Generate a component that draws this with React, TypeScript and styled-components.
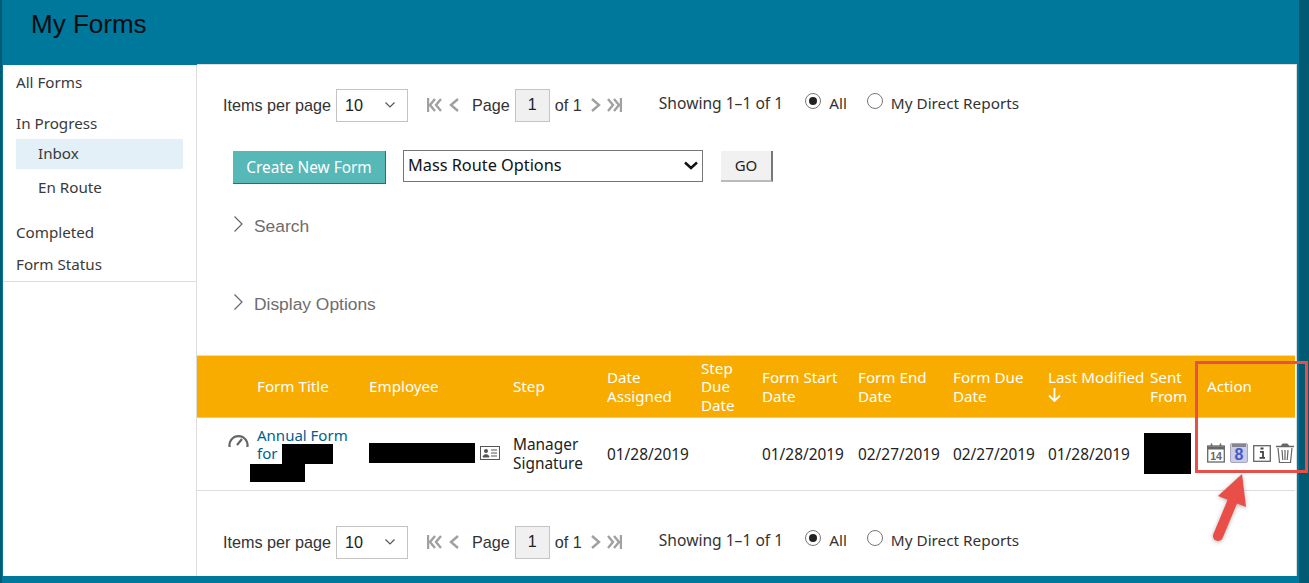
import { createGlobalStyle, styled } from "styled-components";

const GlobalStyle = createGlobalStyle`
  html, body {
    margin: 0;
    padding: 0;
    background: #00789b;
  }
  * {
    box-sizing: border-box;
  }
`;

const Page = styled.div`
  position: relative;
  width: 1309px;
  height: 583px;
  overflow: hidden;
  background: #00789b;
  border-left: 2px solid #005a72;
  font-family: "Noto Sans", sans-serif;
  color: #222;
`;

const Title = styled.h1`
  height: 64px;
  margin: 0;
  padding: 8px 0 0 29px;
  font: 400 26px/32px "Liberation Sans", sans-serif;
  color: #050d10;
`;

const Body = styled.div`
  display: flex;
  height: 512px;
`;

const Sidebar = styled.nav`
  width: 194px;
  height: 511px;
  margin: 1px 0 0 1px;
  background: #fff;
  border-right: 1px solid #ddd;
  font-size: 15.2px;
  color: #3a3a3a;
`;

const NavList = styled.div`
  height: 217px;
  padding: 3px 13px 0 13px;
  border-bottom: 1px solid #ddd;
`;

const NavItem = styled.div<{ $top?: number; $sub?: boolean; $active?: boolean }>`
  height: 30px;
  margin-top: ${(p) => p.$top ?? 0}px;
  padding-left: ${(p) => (p.$sub ? 22 : 0)}px;
  line-height: 28px;
  background: ${(p) => (p.$active ? "#e3f0f8" : "transparent")};
`;

const Main = styled.main`
  width: 1100px;
  background: #fff;
  border-top: 1px solid #ddd;
  border-right: 1px solid #ddd;
`;

const Pager = styled.div<{ $top: number }>`
  display: flex;
  align-items: center;
  height: 34px;
  margin-top: ${(p) => p.$top}px;
  padding-left: 26px;
  font-size: 15.3px;
`;

const ArialLabel = styled.span`
  font: 16.2px "Liberation Sans", sans-serif;
  color: #333;
`;

const PerPage = styled.div`
  display: flex;
  align-items: center;
  justify-content: space-between;
  width: 72px;
  height: 33px;
  margin: 0 19px 0 5px;
  padding: 0 11px 0 8px;
  border: 1px solid #c4c4c4;
  font: 16.2px "Liberation Sans", sans-serif;
`;

const PageBox = styled.div`
  display: flex;
  align-items: center;
  justify-content: center;
  width: 35px;
  height: 33px;
  margin: 0 5px;
  background: #f0f0f0;
  border: 1px solid #c4c4c4;
  font: 16px "Liberation Sans", sans-serif;
`;

const PagerIcon = styled.svg<{ $w: number; $left?: number }>`
  width: ${(p) => p.$w}px;
  height: 16px;
  margin-left: ${(p) => p.$left ?? 0}px;
  fill: none;
  stroke: #a0a0a0;
  stroke-width: 2.4;
  flex: none;
`;

const PageLabel = styled(ArialLabel)`
  margin-left: 13px;
`;

const Showing = styled.span`
  margin: -4px 22px 0 37px;
  font-size: 15.6px;
  color: #333;
`;

const RadioLabel = styled.label`
  display: flex;
  align-items: center;
  gap: 8px;
  margin: -4px 20px 0 0;
  color: #333;
`;

const Radio = styled.span<{ $on?: boolean }>`
  position: relative;
  width: 16px;
  height: 16px;
  margin-top: -4px;
  border: 1px solid #777;
  border-radius: 50%;
  &::after {
    content: "";
    display: ${(p) => (p.$on ? "block" : "none")};
    position: absolute;
    inset: 3px;
    border-radius: 50%;
    background: #222;
  }
`;

const ActionRow = styled.div`
  display: flex;
  align-items: center;
  height: 34px;
  margin-top: 27px;
  padding-left: 36px;
`;

const CreateButton = styled.button`
  width: 153px;
  height: 33px;
  margin-top: 2px;
  padding: 2px 0 0;
  background: #57b8b8;
  border: 0;
  border-bottom: 1px solid #2c6f73;
  border-right: 1px solid #2c6f73;
  color: #fff;
  font: 15.4px "Noto Sans", sans-serif;
`;

const MassSelect = styled.div`
  display: flex;
  align-items: center;
  justify-content: space-between;
  width: 300px;
  height: 32px;
  margin: 0 18px 0 17px;
  padding: 0 4px 2px;
  border: 1px solid #767676;
  font-size: 16.3px;
  color: #111;
`;

const GoButton = styled.button`
  width: 52px;
  height: 31px;
  padding: 0;
  background: #f1f1f1;
  border: 0;
  border-right: 2px solid #777;
  border-bottom: 2px solid #bbb;
  font: 15px "Noto Sans", sans-serif;
  color: #222;
`;

const Section = styled.div<{ $top: number }>`
  display: flex;
  align-items: center;
  gap: 10px;
  height: 24px;
  margin-top: ${(p) => p.$top}px;
  padding-left: 36px;
  font: 17.4px "Liberation Sans", sans-serif;
  color: #6d6d6d;
`;

const Chevron = styled.svg`
  width: 11px;
  height: 18px;
  margin-top: -5px;
  fill: none;
  stroke: #666;
  stroke-width: 1.2;
`;

const Grid = styled.div`
  display: grid;
  grid-template-columns: 172px 144px 94px 94px 61px 96px 95px 95px 102px 57px 88px;
  width: 1098px;
  margin-top: 39px;
  border-top: 1px solid #ddd;
`;

const HeadCell = styled.div`
  display: flex;
  align-items: center;
  height: 62px;
  background: #f8ac00;
  border-bottom: 1px solid #f3c66a;
  color: #fff;
  font-size: 15.2px;
  line-height: 18.5px;
`;

const TitleHead = styled(HeadCell)`
  padding-left: 60px;
`;

const RowCell = styled.div`
  display: flex;
  align-items: center;
  height: 73px;
  font-size: 15.4px;
  line-height: 19px;
  color: #222;
  border-bottom: 1px solid #ddd;
`;

const TitleCell = styled(RowCell)`
  position: relative;
  align-items: flex-start;
  padding: 8px 0 0 60px;
`;

const FormLink = styled.a`
  color: #005f8f;
  font-size: 15px;
  line-height: 18px;
`;

const Blackout = styled.span<{ $w: number; $h: number }>`
  display: block;
  flex: none;
  width: ${(p) => p.$w}px;
  height: ${(p) => p.$h}px;
  background: #000;
`;

const FirstNameBlackout = styled(Blackout)`
  position: absolute;
  left: 85px;
  top: 26px;
`;

const LastNameBlackout = styled(Blackout)`
  position: absolute;
  left: 53px;
  top: 46px;
`;

const EmployeeBlackout = styled(Blackout)`
  margin-top: -3px;
`;

const SenderBlackout = styled(Blackout)`
  margin: -2px 0 0 -6px;
`;

const GaugeIcon = styled.svg`
  position: absolute;
  left: 31px;
  top: 14px;
  width: 21px;
  height: 15px;
  fill: none;
  stroke: #666;
`;

const CardIcon = styled.svg`
  flex: none;
  width: 20px;
  height: 14px;
  margin: -2px 0 0 5px;
`;

const IconRow = styled.div`
  display: flex;
  align-items: center;
  gap: 5px;
  margin-top: -2px;
`;

const Callout = styled.div`
  position: absolute;
  left: 1193px;
  top: 361px;
  width: 113px;
  height: 112px;
  border: 3px solid #e94e48;
  pointer-events: none;
`;

const Arrow = styled.svg`
  position: absolute;
  left: 1198px;
  top: 470px;
  width: 60px;
  height: 80px;
  filter: drop-shadow(0 1px 2px rgba(0, 0, 0, 0.3));
`;

const RightStrip = styled.div`
  position: absolute;
  right: 0;
  top: 0;
  bottom: 0;
  width: 10px;
  background: #005a72;
`;

const ChevronDown = () => (
  <svg width="12" height="8" viewBox="0 0 12 8" fill="none" stroke="#555" strokeWidth="1.2">
    <path d="M1.5 1.5 6 6l4.5-4.5" />
  </svg>
);

const PagerControls = () => (
  <>
    <PagerIcon viewBox="0 0 16 16" $w={16}>
      <path d="M1 1v14M8 2 3 8l5 6M14 2 9 8l5 6" />
    </PagerIcon>
    <PagerIcon viewBox="0 0 11 16" $w={11} $left={5}>
      <path d="M10 2 3 8l7 6" />
    </PagerIcon>
    <PageLabel>Page</PageLabel>
    <PageBox>1</PageBox>
    <ArialLabel>of 1</ArialLabel>
    <PagerIcon viewBox="0 0 11 16" $w={11} $left={8}>
      <path d="M2 2l7 6-7 6" />
    </PagerIcon>
    <PagerIcon viewBox="0 0 16 16" $w={16} $left={5}>
      <path d="M2 2l5 6-5 6M8 2l5 6-5 6M15 1v14" />
    </PagerIcon>
  </>
);

const PagerBar = ({ top }: { top: number }) => (
  <Pager $top={top}>
    <ArialLabel>Items per page</ArialLabel>
    <PerPage>
      10
      <ChevronDown />
    </PerPage>
    <PagerControls />
    <Showing>Showing 1–1 of 1</Showing>
    <RadioLabel>
      <Radio $on />
      All
    </RadioLabel>
    <RadioLabel>
      <Radio />
      My Direct Reports
    </RadioLabel>
  </Pager>
);

const SectionChevron = () => (
  <Chevron viewBox="0 0 11 18">
    <path d="M1.5 1.5 9 9l-7.5 7.5" />
  </Chevron>
);

const ActionIcons = () => (
  <IconRow>
    <svg width="18" height="20" viewBox="0 0 18 20" fill="none" stroke="#666">
      <rect x="0.7" y="3" width="16.6" height="16" strokeWidth="1.3" />
      <path d="M1 5h16" strokeWidth="3" />
      <path d="M4.5 0.5v3M13.5 0.5v3" strokeWidth="1.5" />
      <text x="9" y="16.5" fontSize="10.5" fontFamily="Liberation Sans" fontWeight="700" fill="#666" stroke="none" textAnchor="middle">
        14
      </text>
    </svg>
    <svg width="18" height="20" viewBox="0 0 18 20">
      <rect x="0.5" y="0.5" width="17" height="19" rx="1.5" fill="#c9cbe8" stroke="#a5a5bd" />
      <path d="M2 1h14v3H2z" fill="#85858f" />
      <text x="9" y="16.5" fontSize="16" fontFamily="Liberation Sans" fontWeight="700" fill="#4857c4" textAnchor="middle">
        8
      </text>
    </svg>
    <svg width="18" height="17" viewBox="0 0 18 17" fill="none" stroke="#666">
      <rect x="0.7" y="0.7" width="16.6" height="15.6" strokeWidth="1.3" />
      <path d="M7.5 3.5h3M7 6.8h3v6M6.5 12.8h5.5" stroke="#444" strokeWidth="1.8" />
    </svg>
    <svg width="18" height="20" viewBox="0 0 18 20" fill="none" stroke="#666">
      <path d="M0 3.5h18" strokeWidth="1.5" />
      <path d="M5.5 3 6.5 1h5l1 2z" fill="#666" strokeWidth="1" />
      <path d="M2 5l1.5 14.500h11L16 5" strokeWidth="1.2" />
      <path d="M6 7l.8 10M9 7v10M12 7l-.8 10" strokeWidth="1.2" />
    </svg>
  </IconRow>
);

export default function App() {
  return (
    <Page>
      <GlobalStyle />
      <Title>My Forms</Title>
      <Body>
        <Sidebar>
          <NavList>
            <NavItem>All Forms</NavItem>
            <NavItem $top={11}>In Progress</NavItem>
            <NavItem $sub $active>
              Inbox
            </NavItem>
            <NavItem $top={4} $sub>
              En Route
            </NavItem>
            <NavItem $top={15}>Completed</NavItem>
            <NavItem $top={2}>Form Status</NavItem>
          </NavList>
        </Sidebar>
        <Main>
          <PagerBar top={23} />
          <ActionRow>
            <CreateButton>Create New Form</CreateButton>
            <MassSelect>
              Mass Route Options
              <svg width="14" height="9" viewBox="0 0 14 9" fill="none" stroke="#111" strokeWidth="2.4">
                <path d="M1 1.5 7 7l6-5.5" />
              </svg>
            </MassSelect>
            <GoButton>GO</GoButton>
          </ActionRow>
          <Section $top={31}>
            <SectionChevron />
            Search
          </Section>
          <Section $top={54}>
            <SectionChevron />
            Display Options
          </Section>
          <Grid>
            <TitleHead>Form Title</TitleHead>
            <HeadCell>Employee</HeadCell>
            <HeadCell>Step</HeadCell>
            <HeadCell>
              Date
              <br />
              Assigned
            </HeadCell>
            <HeadCell>
              Step
              <br />
              Due
              <br />
              Date
            </HeadCell>
            <HeadCell>
              Form Start
              <br />
              Date
            </HeadCell>
            <HeadCell>
              Form End
              <br />
              Date
            </HeadCell>
            <HeadCell>
              Form Due
              <br />
              Date
            </HeadCell>
            <HeadCell>
              <div>
                Last Modified
                <br />
                <svg width="13" height="15" viewBox="0 0 13 15" fill="none" stroke="#fff" strokeWidth="1.8">
                  <path d="M6.5 1v13M1 8.5l5.5 5.5L12 8.5" />
                </svg>
              </div>
            </HeadCell>
            <HeadCell>
              Sent
              <br />
              From
            </HeadCell>
            <HeadCell>Action</HeadCell>
            <TitleCell>
              <GaugeIcon viewBox="0 0 21 15">
                <path d="M2 16a9 9 0 1 1 17 0" strokeWidth="2.2" />
                <path d="M9 13l5-6" strokeWidth="2.2" />
              </GaugeIcon>
              <FormLink>
                Annual Form
                <br />
                for
              </FormLink>
              <FirstNameBlackout $w={51} $h={20} />
              <LastNameBlackout $w={55} $h={18} />
            </TitleCell>
            <RowCell>
              <EmployeeBlackout $w={106} $h={20} />
              <CardIcon viewBox="0 0 20 14">
                <rect x="0.5" y="0.5" width="19" height="13" fill="none" stroke="#555" />
                <circle cx="6" cy="5" r="2" fill="#555" />
                <path d="M3 11c0-3 6-3 6 0zM11 4h6M11 7h6M11 10h6" fill="#555" stroke="#555" />
              </CardIcon>
            </RowCell>
            <RowCell>
              Manager
              <br />
              Signature
            </RowCell>
            <RowCell>01/28/2019</RowCell>
            <RowCell />
            <RowCell>01/28/2019</RowCell>
            <RowCell>02/27/2019</RowCell>
            <RowCell>02/27/2019</RowCell>
            <RowCell>01/28/2019</RowCell>
            <RowCell>
              <SenderBlackout $w={47} $h={41} />
            </RowCell>
            <RowCell>
              <ActionIcons />
            </RowCell>
          </Grid>
          <PagerBar top={34} />
        </Main>
      </Body>
      <RightStrip />
      <Callout />
      <Arrow viewBox="0 0 60 80">
        <path d="M42 4 18 26l28 11z" fill="#e94e48" />
        <path d="M33 30 18 66" stroke="#e94e48" strokeWidth="10" strokeLinecap="round" />
      </Arrow>
    </Page>
  );
}
